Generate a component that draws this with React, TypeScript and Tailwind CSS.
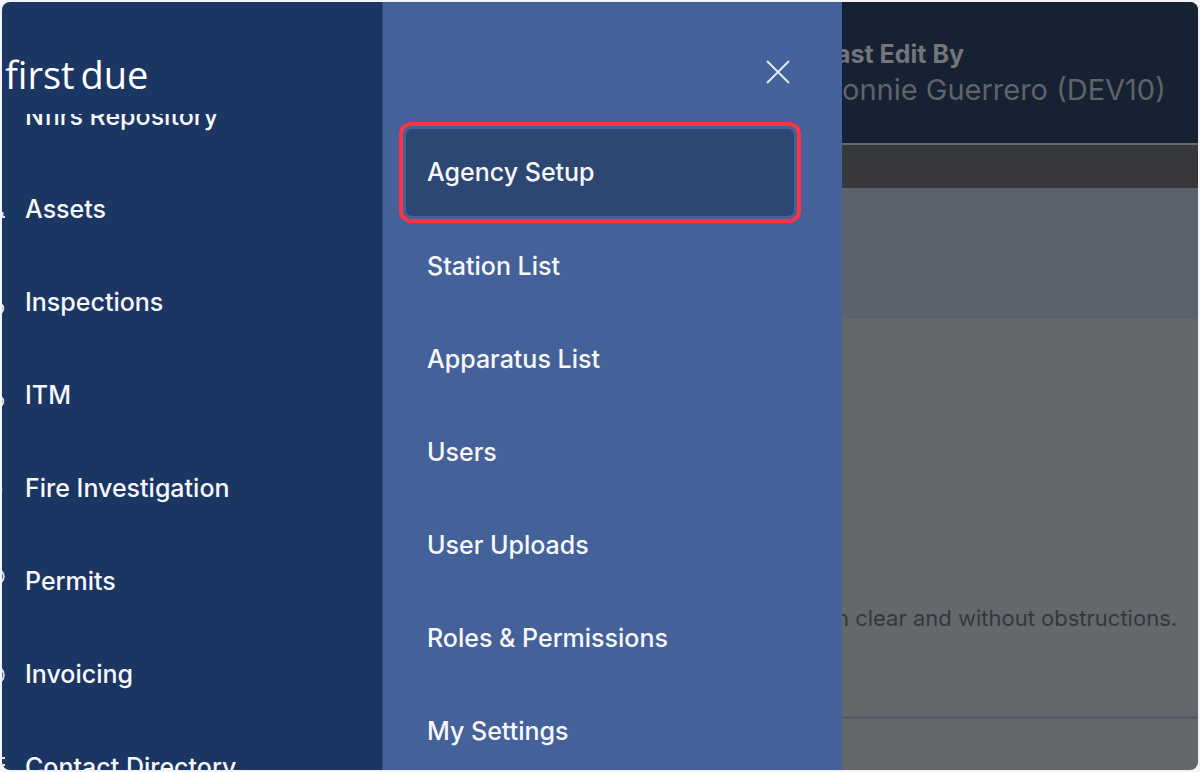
import type { ReactNode } from "react";

type ModuleItem = { label: string; icon: ReactNode };

const modules: ModuleItem[] = [
  { label: "Nfirs Repository", icon: null },
  { label: "Assets", icon: <path d="M0 19H3M0.5 14v5" /> },
  { label: "Inspections", icon: <path d="M-1 13c3 2 3 7 0 9" /> },
  { label: "ITM", icon: <path d="M-1 13c3 2 3 7 0 9" /> },
  { label: "Fire Investigation", icon: <path d="M-3 7c3 3 3 8 0 11" /> },
  { label: "Permits", icon: <path d="M-2 0c5 3 5 10 0 13" /> },
  { label: "Invoicing", icon: <path d="M-2 5c5 3 5 11 0 14" /> },
  { label: "Contact Directory", icon: <path d="M0 2h3M0 9h3M0.5 9v8" /> },
];

const pages = [
  "Station List",
  "Apparatus List",
  "Users",
  "User Uploads",
  "Roles & Permissions",
  "My Settings",
];

function Sidebar() {
  return (
    <nav aria-label="Modules" className="flex w-[380px] shrink-0 flex-col bg-[#1c3664]">
      <a
        href="#home"
        className="flex h-28 shrink-0 gap-[6px] pt-[46px] pl-[3px] font-['Open_Sans',sans-serif] text-[38px] leading-[52px] font-normal text-white"
      >
        <span>first</span>
        <span>due</span>
      </a>
      <ul className="flex min-h-0 flex-1 flex-col justify-end overflow-hidden">
        {modules.map((item) => (
          <li key={item.label} className="shrink-0 last:-mb-11">
            <a href="#module" className="flex h-[93px] items-center gap-5 whitespace-nowrap">
              <svg
                aria-hidden="true"
                viewBox="0 0 3 24"
                className="h-6 w-[3px] shrink-0 fill-none stroke-[#dfe3ea] stroke-2"
              >
                {item.icon}
              </svg>
              {item.label}
            </a>
          </li>
        ))}
      </ul>
    </nav>
  );
}

function Drawer() {
  return (
    <nav
      aria-label="Administration"
      className="flex w-[460px] shrink-0 flex-col border-l border-[#2c4a7c] bg-[#446299]"
    >
      <div className="flex h-[120px] shrink-0 items-center justify-end pt-5 pr-[52px]">
        <button type="button" aria-label="Close">
          <svg viewBox="0 0 24 24" className="size-6 fill-none stroke-[#e4e8f0] stroke-2">
            <path d="M1 1l22 22M23 1L1 23" />
          </svg>
        </button>
      </div>
      <div className="mr-[41px] ml-4 shrink-0 rounded-xl border-4 border-[#fb3343] p-[3px]">
        <a href="#agency" className="flex h-[87px] items-center rounded-md bg-[#2d4773] pl-[21px]">
          Agency Setup
        </a>
      </div>
      <ul className="-mt-[3px] min-h-0 flex-1 overflow-hidden">
        {pages.map((label) => (
          <li key={label}>
            <a href="#page" className="flex h-[93px] items-center pl-11">
              {label}
            </a>
          </li>
        ))}
      </ul>
    </nav>
  );
}

function Record() {
  return (
    <main className="flex min-w-0 flex-1 flex-col overflow-hidden bg-[#65686b] whitespace-nowrap">
      <header className="h-[143px] shrink-0 border-b-2 border-[#65686d] bg-[#172134] pt-8">
        <p className="-ml-[6px] text-[25px] leading-10 font-bold text-[#737577]">ast Edit By</p>
        <p className="text-[29px] leading-8 font-normal text-[#606367]">onnie Guerrero (DEV10)</p>
      </header>
      <div className="h-[43px] shrink-0 bg-[#37383d]" />
      <div className="h-[131px] shrink-0 bg-[#5a626c]" />
      <section className="flex min-h-0 flex-1 flex-col justify-end">
        <p className="-ml-[6px] pb-[82px] text-[22px] leading-8 font-normal text-[#34373e]">
          n clear and without obstructions.
        </p>
        <div className="h-[54px] border-t-3 border-[#535b65]" />
      </section>
    </main>
  );
}

export default function App() {
  return (
    <div className="h-screen bg-[#f4f3f9] p-[2px]">
      <div className="flex h-full overflow-hidden rounded-lg font-['Inter',sans-serif] text-[25px] font-medium text-[#f7f8fb]">
        <Sidebar />
        <Drawer />
        <Record />
      </div>
    </div>
  );
}
